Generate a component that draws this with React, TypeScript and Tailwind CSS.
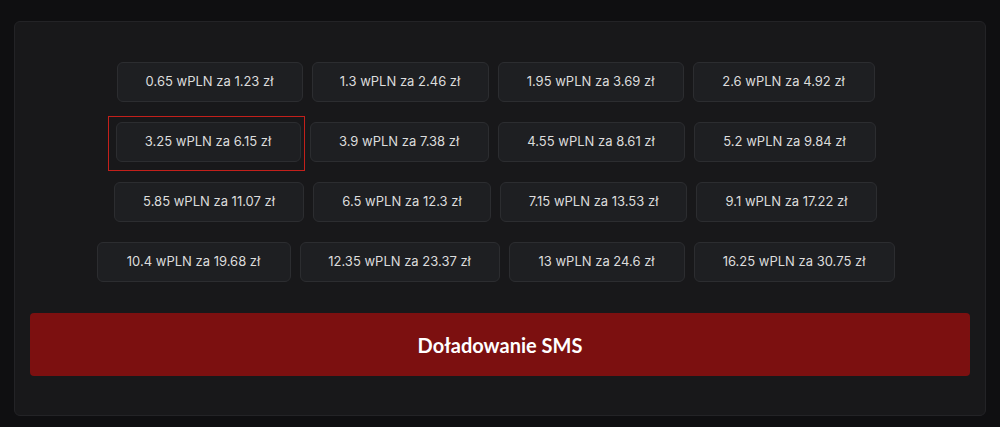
const rows = [
  [
    { wpln: "0.65", zl: "1.23", w: 186 },
    { wpln: "1.3", zl: "2.46", w: 177 },
    { wpln: "1.95", zl: "3.69", w: 186 },
    { wpln: "2.6", zl: "4.92", w: 182 },
  ],
  [
    { wpln: "3.25", zl: "6.15", w: 185 },
    { wpln: "3.9", zl: "7.38", w: 179 },
    { wpln: "4.55", zl: "8.61", w: 187 },
    { wpln: "5.2", zl: "9.84", w: 182 },
  ],
  [
    { wpln: "5.85", zl: "11.07", w: 190 },
    { wpln: "6.5", zl: "12.3", w: 178 },
    { wpln: "7.15", zl: "13.53", w: 187 },
    { wpln: "9.1", zl: "17.22", w: 181 },
  ],
  [
    { wpln: "10.4", zl: "19.68", w: 194 },
    { wpln: "12.35", zl: "23.37", w: 200 },
    { wpln: "13", zl: "24.6", w: 176 },
    { wpln: "16.25", zl: "30.75", w: 201 },
  ],
];

export default function App() {
  return (
    <div className="min-h-[427px] bg-[#0f0f11] pt-[21px] pb-[10px]">
      <div className="mx-[14px] h-[395px] rounded-md border border-[#232326] bg-[#18181a] px-[15px] pt-10">
        <div className="flex flex-col gap-5">
          {rows.map((row, i) => (
            <div key={i} className="flex justify-center">
              {row.map((item) => {
                const selected = item.wpln === "3.25";
                return (
                  <button
                    key={item.wpln}
                    style={{ width: item.w }}
                    className="relative mr-[9px] h-10 rounded-md border border-[#2c2d30] bg-[#1e1f22] text-[13px] text-[#dcdcdc] font-['Inter',sans-serif]"
                  >
                    {item.wpln} wPLN za {item.zl} zł
                    {selected && (
                      <span className="absolute -top-[7px] -bottom-[10px] -left-[9px] -right-[5px] border border-[#c3201b]" />
                    )}
                  </button>
                );
              })}
            </div>
          ))}
        </div>
        <button className="mt-[31px] h-[63px] w-full rounded-[4px] bg-[#7c1010] text-[20px] font-bold text-white font-['Lato',sans-serif]">
          Doładowanie SMS
        </button>
      </div>
    </div>
  );
}
